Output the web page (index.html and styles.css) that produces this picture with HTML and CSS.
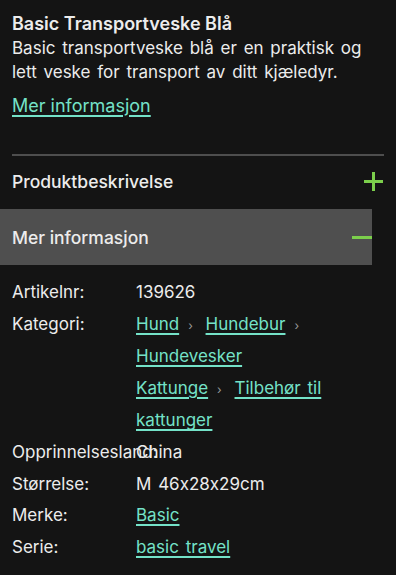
FILE: index.html
```html
<!DOCTYPE html>
<html lang="no">
<head>
<meta charset="utf-8">
<link rel="stylesheet" href="styles.css">
</head>
<body>
<div class="page">
  <section class="intro">
    <h1 class="title">Basic Transportveske Blå</h1>
    <p class="desc">Basic transportveske blå er en praktisk og lett veske for transport av ditt kjæledyr.</p>
    <a class="link more" href="#">Mer informasjon</a>
  </section>
  <div class="divider"></div>
  <div class="acc-head">
    <span class="acc-title">Produktbeskrivelse</span>
    <svg class="acc-icon" width="21" height="21" viewBox="0 0 21 21"><path d="M10.5 1v19M1 10.5h19" stroke="#7ccf4c" stroke-width="3" fill="none"/></svg>
  </div>
  <div class="acc-head open">
    <span class="acc-title">Mer informasjon</span>
    <svg class="acc-icon" width="20" height="21" viewBox="0 0 20 21"><path d="M0 10.5h20" stroke="#7ccf4c" stroke-width="3" fill="none"/></svg>
  </div>
  <dl class="specs">
    <div class="row"><dt>Artikelnr:</dt><dd>139626</dd></div>
    <div class="row"><dt>Kategori:</dt><dd>
      <div class="crumbs"><a class="link" href="#">Hund</a><span class="sep">›</span> <a class="link" href="#">Hundebur</a><span class="sep">›</span> <a class="link" href="#">Hundevesker</a></div>
      <div class="crumbs"><a class="link" href="#">Kattunge</a><span class="sep">›</span> <a class="link" href="#">Tilbehør til kattunger</a></div>
    </dd></div>
    <div class="row"><dt class="overflow">Opprinnelsesland:</dt><dd>China</dd></div>
    <div class="row"><dt>Størrelse:</dt><dd>M 46x28x29cm</dd></div>
    <div class="row"><dt>Merke:</dt><dd><a class="link" href="#">Basic</a></dd></div>
    <div class="row"><dt>Serie:</dt><dd><a class="link" href="#">basic travel</a></dd></div>
  </dl>
</div>
</body>
</html>
```
FILE: styles.css
```css
html, body {
  margin: 0;
  padding: 0;
  background: #141414;
}
body {
  font-family: Inter, "Noto Sans", sans-serif;
  font-feature-settings: "calt" 0;
  color: #ececec;
  font-size: 17px;
}
.page {
  width: 396px;
  overflow: hidden;
}
.intro {
  padding: 12px 12px 0 12px;
}
.title {
  margin: 0;
  font-size: 18px;
  font-weight: 600;
  line-height: 24px;
}
.desc {
  margin: 0;
  font-size: 17px;
  line-height: 24px;
  word-spacing: 2px;
}
.link {
  color: #74e2c8;
  text-decoration: underline;
  text-underline-offset: 3px;
  text-decoration-thickness: 2px;
}
.more {
  display: inline-block;
  margin-top: 10px;
  font-size: 18px;
  line-height: 24px;
}
.divider {
  margin: 36px 12px 0 12px;
  height: 2px;
  background: #4e4e4e;
}
.acc-head {
  display: flex;
  align-items: center;
  justify-content: space-between;
  height: 50px;
  padding: 0 12px 3px 12px;
  font-size: 17.5px;
  font-weight: 500;
}
.acc-head.open {
  margin-right: 24px;
  padding: 0 0 0 12px;
  height: 56px;
  background: #4f4f4f;
}
.specs {
  margin: 12px 0 0 0;
  padding: 0 12px;
  word-spacing: 2px;
}
.row {
  display: grid;
  grid-template-columns: 124px 1fr;
  line-height: 31.6px;
}
dt, dd {
  margin: 0;
}
dt.overflow {
  white-space: nowrap;
  width: 0;
}
.crumbs .sep {
  color: #9a9a9a;
  font-size: 12px;
  margin: 0 6px 0 9px;
}
```
